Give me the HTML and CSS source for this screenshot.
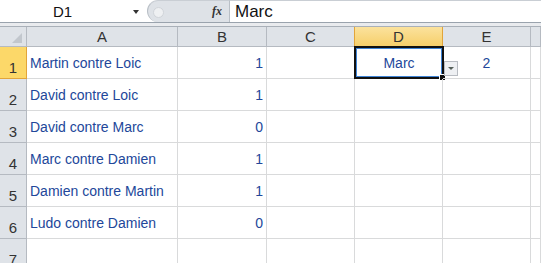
FILE: index.html
```html
<!DOCTYPE html>
<html lang="fr">
<head>
  <meta charset="UTF-8" />
  <title>Classeur</title>
  <link rel="stylesheet" href="styles.css">
</head>
<body>
  <div class="formula-bar">
    <div class="name-box">
      <span class="name-text">D1</span>
      <span class="name-arrow"></span>
    </div>
    <div class="fx-area">
      <span class="fx-dot"></span>
      <span class="fx">fx</span>
    </div>
    <div class="formula-input">Marc</div>
  </div>
  <div class="band"></div>

  <div class="sheet">
    <div class="corner"><span class="corner-tri"></span></div>
    <div class="col-head">A</div>
    <div class="col-head">B</div>
    <div class="col-head">C</div>
    <div class="col-head selected">D</div>
    <div class="col-head">E</div>
    <div class="col-head"></div>

    <div class="row-head selected">1</div>
    <div class="cell">Martin contre Loic</div>
    <div class="cell num">1</div>
    <div class="cell"></div>
    <div class="cell center active">Marc<span class="fill-handle"></span></div>
    <div class="cell center">2<span class="dd-btn"></span></div>
    <div class="cell"></div>

    <div class="row-head">2</div>
    <div class="cell">David contre Loic</div>
    <div class="cell num">1</div>
    <div class="cell"></div>
    <div class="cell"></div>
    <div class="cell"></div>
    <div class="cell"></div>

    <div class="row-head">3</div>
    <div class="cell">David contre Marc</div>
    <div class="cell num">0</div>
    <div class="cell"></div>
    <div class="cell"></div>
    <div class="cell"></div>
    <div class="cell"></div>

    <div class="row-head">4</div>
    <div class="cell">Marc contre Damien</div>
    <div class="cell num">1</div>
    <div class="cell"></div>
    <div class="cell"></div>
    <div class="cell"></div>
    <div class="cell"></div>

    <div class="row-head">5</div>
    <div class="cell">Damien contre Martin</div>
    <div class="cell num">1</div>
    <div class="cell"></div>
    <div class="cell"></div>
    <div class="cell"></div>
    <div class="cell"></div>

    <div class="row-head">6</div>
    <div class="cell">Ludo contre Damien</div>
    <div class="cell num">0</div>
    <div class="cell"></div>
    <div class="cell"></div>
    <div class="cell"></div>
    <div class="cell"></div>

    <div class="row-head">7</div>
    <div class="cell"></div>
    <div class="cell"></div>
    <div class="cell"></div>
    <div class="cell"></div>
    <div class="cell"></div>
    <div class="cell"></div>
  </div>
</body>
</html>
```

FILE: styles.css
```css
body {
  margin: 0;
  padding: 0;
  width: 541px;
  height: 263px;
  overflow: hidden;
  background: #ffffff;
  font-family: "Liberation Sans", Arial, sans-serif;
}
.formula-bar {
  display: flex;
  height: 22px;
  border-bottom: 1px solid #9aa3ad;
  background: #ffffff;
}
.name-box {
  width: 143px;
  display: flex;
  align-items: center;
  position: relative;
}
.name-text {
  flex: 1;
  text-align: center;
  font-size: 15px;
  color: #111;
  padding-right: 18px;
}
.name-arrow {
  position: absolute;
  left: 133px;
  top: 10px;
  border-left: 3px solid transparent;
  border-right: 3px solid transparent;
  border-top: 4px solid #333;
}
.fx-area {
  margin-left: 4px;
  width: 82px;
  background: #dee2e7;
  border-top: 1px solid #c9ced4;
  border-left: 1px solid #b9bfc6;
  border-radius: 12px 0 0 12px;
  display: flex;
  align-items: center;
  box-sizing: border-box;
  position: relative;
}
.fx-dot {
  position: absolute;
  left: 5px;
  top: 6px;
  width: 9px;
  height: 9px;
  border-radius: 50%;
  background: #eef0f2;
  border: 1px solid #d0d4d9;
}
.fx {
  margin-left: auto;
  margin-right: 7px;
  font-family: "Liberation Serif", serif;
  font-style: italic;
  font-weight: bold;
  font-size: 12px;
  color: #333;
}
.formula-input {
  flex: 1;
  border-left: 1px solid #b9bfc6;
  border-top: 1px solid #c9ced4;
  padding-left: 5px;
  font-size: 17px;
  line-height: 21px;
  color: #111;
}
.band {
  height: 3px;
  background: #e9ebee;
  border-bottom: 1px solid #a9b0b8;
}
.sheet {
  display: grid;
  grid-template-columns: 27px 151px 89px 88px 88px 88px 10px;
  grid-template-rows: 20px repeat(6, 32px) 32px;
  font-size: 14px;
}
.corner {
  background: #dfe3e8;
  border-right: 1px solid #b5bac1;
  border-bottom: 1px solid #b5bac1;
  position: relative;
}
.corner-tri {
  position: absolute;
  right: 4px;
  bottom: 3px;
  border-left: 10px solid transparent;
  border-bottom: 10px solid #c2c7cd;
}
.col-head {
  background: #dfe3e8;
  border-right: 1px solid #b5bac1;
  border-bottom: 1px solid #b5bac1;
  display: flex;
  align-items: center;
  justify-content: center;
  color: #333;
  font-size: 15px;
}
.col-head.selected {
  background: linear-gradient(#fbe29d, #f6cf6a);
  border-right: 1px solid #e2a53a;
  border-bottom: 1px solid #e2a53a;
  border-left: 1px solid #e2a53a;
  margin-left: -1px;
}
.row-head {
  background: #dfe3e8;
  border-right: 1px solid #b5bac1;
  border-bottom: 1px solid #b5bac1;
  display: flex;
  align-items: flex-end;
  justify-content: center;
  padding-bottom: 2px;
  color: #333;
  font-size: 15px;
}
.row-head.selected {
  background: #fcd869;
  border-right: 1px solid #e2a53a;
  border-bottom: 1px solid #e2a53a;
}
.cell {
  border-right: 1px solid #d9dadb;
  border-bottom: 1px solid #d9dadb;
  display: flex;
  align-items: center;
  padding: 0 3px;
  color: #22479a;
  white-space: nowrap;
  position: relative;
}
.cell.num {
  justify-content: flex-end;
}
.cell.center {
  justify-content: center;
}
.cell.active {
  border: 2px solid #111;
  box-shadow: inset 0 0 0 1px #3f84d6;
  margin: -1px -1px 0 -1px;
  padding: 0;
}
.fill-handle {
  position: absolute;
  right: -4px;
  bottom: -4px;
  width: 5px;
  height: 5px;
  background: #111;
  border: 1px solid #fff;
}
.dd-btn {
  position: absolute;
  left: 1px;
  top: 14px;
  width: 14px;
  height: 15px;
  background: #eef0f3;
  border: 1px solid #b8bcc2;
  box-sizing: border-box;
}
.dd-btn::after {
  content: "";
  position: absolute;
  left: 3px;
  top: 5px;
  border-left: 3px solid transparent;
  border-right: 3px solid transparent;
  border-top: 3px solid #56605a;
}
```
